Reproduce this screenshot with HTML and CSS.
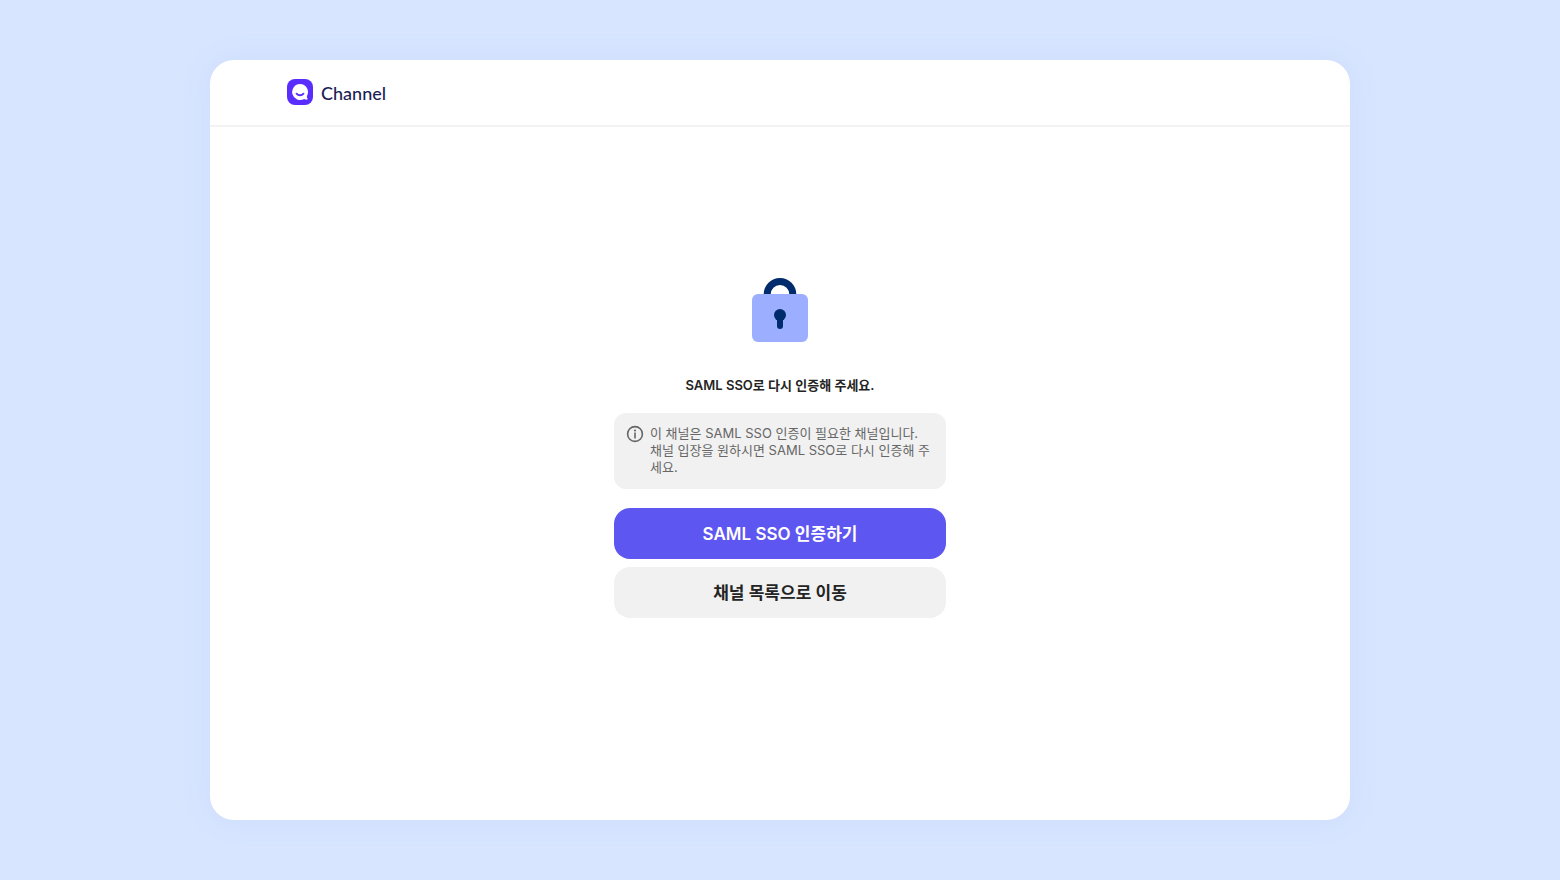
FILE: index.html
```html
<!DOCTYPE html>
<html lang="ko">
<head>
    <meta charset="UTF-8">
    <meta name="viewport" content="width=device-width, initial-scale=1">
    <title>Channel</title>
    <link rel="stylesheet" href="styles.css">
</head>
<body>
<div class="window">
    <header class="header">
        <a class="logo" href="#">
            <svg class="logo-mark" viewBox="0 0 26 26" aria-hidden="true">
                <rect width="26" height="26" rx="8" fill="#5a2dff"/>
                <path d="M13 5a8 8 0 1 0 4.200 14.900c1 .7 2.100 .9 3 .7c.5-.1.6-.6.3-1c-.5-.8-.7-1.700-.5-2.700A8 8 0 0 0 13 5z" fill="#fff"/>
                <path d="M9.500 14.600c1.800 2.200 5.200 2.200 7 0" fill="none" stroke="#5a2dff" stroke-width="1.800" stroke-linecap="round"/>
            </svg>
            <span class="logo-text">Channel</span>
        </a>
    </header>
    <main class="main">
        <svg class="lock" viewBox="0 0 56 64" aria-hidden="true">
            <path d="M15.200 20v-3.700a12.800 12.800 0 0 1 25.600 0V20" fill="none" stroke="#002c6e" stroke-width="7"/>
            <rect y="16" width="56" height="48" rx="6" fill="#9baeff"/>
            <circle cx="28" cy="37" r="6" fill="#002c6e"/>
            <path d="M28 38v10" stroke="#002c6e" stroke-width="6" stroke-linecap="round"/>
        </svg>
        <h1 class="title">SAML SSO로 다시 인증해 주세요.</h1>
        <div class="notice">
            <svg class="notice-icon" viewBox="0 0 18 18" aria-hidden="true">
                <circle cx="9" cy="9" r="7.400" fill="none" stroke="#666" stroke-width="1.600"/>
                <circle cx="9" cy="5.500" r="1.100" fill="#666"/>
                <path d="M9 7.600v5.800" stroke="#666" stroke-width="1.600"/>
            </svg>
            <p class="notice-text">이 채널은 SAML SSO 인증이 필요한 채널입니다.<br>채널 입장을 원하시면 SAML SSO로 다시 인증해 주세요.</p>
        </div>
        <div class="buttons">
            <button class="btn btn-primary" type="button">SAML SSO 인증하기</button>
            <button class="btn" type="button">채널 목록으로 이동</button>
        </div>
    </main>
</div>
</body>
</html>
```
FILE: styles.css
```css
*{
    box-sizing: border-box;
    margin: 0;
    padding: 0;
}
body{
    display: flex;
    min-height: 100vh;
    padding: 60px 210px;
    background: #d7e5ff;
    color: #242424;
    font-family: Inter, "Noto Sans CJK KR", sans-serif;
}
.window{
    display: flex;
    flex-direction: column;
    flex: 1;
    border-radius: 24px;
    background: #fff;
    box-shadow: 0 0 30px rgba(120, 160, 240, .1);
}
.header{
    padding: 19px 77px 20px;
    border-bottom: 2px solid #f3f3f4;
}
.logo{
    display: inline-flex;
    align-items: center;
    gap: 8px;
    vertical-align: top;
    color: #1d1d55;
    text-decoration: none;
}
.logo-mark{
    width: 26px;
    height: 26px;
}
.logo-text{
    padding-top: 2px;
    font: 500 18px/24px Lato, sans-serif;
}
.main{
    display: flex;
    flex-direction: column;
    flex: 1;
    align-items: center;
    justify-content: center;
    padding: 0 24px 51px;
}
.lock{
    width: 56px;
    height: 64px;
}
.title{
    margin: 35px 0 19px;
    font-size: 13px;
    font-weight: 600;
    line-height: 17px;
}
.notice{
    display: flex;
    gap: 6px;
    width: 100%;
    max-width: 332px;
    padding: 12px 10px 13px 12px;
    border-radius: 12px;
    background: #f1f1f1;
    color: #666;
}
.notice-icon{
    flex: none;
    width: 18px;
    height: 18px;
}
.notice-text{
    font-size: 13px;
    line-height: 17px;
    word-break: break-all;
}
.buttons{
    display: flex;
    flex-direction: column;
    gap: 8px;
    width: 100%;
    max-width: 332px;
    margin-top: 19px;
}
.btn{
    height: 51px;
    border: 0;
    border-radius: 16px;
    background: #f1f1f1;
    color: #242424;
    font-family: inherit;
    font-size: 17px;
    font-weight: 600;
    line-height: 24px;
    cursor: pointer;
}
.btn-primary{
    background: #5e56f0;
    color: #fff;
}
```
